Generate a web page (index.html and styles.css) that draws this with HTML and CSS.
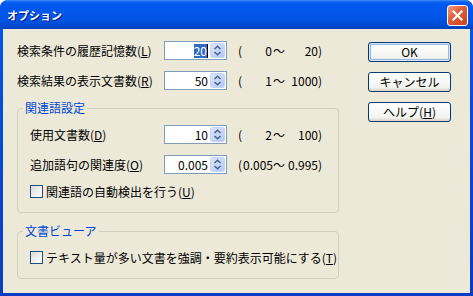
FILE: index.html
```html
<!DOCTYPE html>
<html lang="ja">
<head>
  <meta charset="UTF-8">
  <title>オプション</title>
  <link rel="stylesheet" href="styles.css">
</head>
<body>

  <!-- Options dialog -->
  <div class="window">
    <div class="titlebar">
      <span class="title">オプション</span>
      <span class="close">
        <svg width="13" height="13" viewBox="0 0 13 13"><path d="M2.5 2.5 L10.5 10.5 M10.5 2.5 L2.5 10.5" stroke="#fff" stroke-width="2.2" stroke-linecap="square"/></svg>
      </span>
    </div>

    <div class="client">
      <div class="main">
        <div class="row">
          <label class="label">検索条件の履歴記憶数(<u>L</u>)</label>
          <div class="spin">
            <span class="value"><span class="sel">20</span><span class="caret"></span></span>
            <svg class="arrows" width="15" height="15" viewBox="0 0 15 15"><use href="#spinbtn"/></svg>
          </div>
          <div class="range"><span class="paren">(</span><span class="min">0</span><span class="tilde">～</span><span class="max">20</span><span>)</span></div>
        </div>
        <div class="row">
          <label class="label">検索結果の表示文書数(<u>R</u>)</label>
          <div class="spin">
            <span class="value">50</span>
            <svg class="arrows" width="15" height="15" viewBox="0 0 15 15"><use href="#spinbtn"/></svg>
          </div>
          <div class="range"><span class="paren">(</span><span class="min">1</span><span class="tilde">～</span><span class="max">1000</span><span>)</span></div>
        </div>

        <!-- 関連語設定 -->
        <fieldset class="group">
          <legend>関連語設定</legend>
          <div class="row">
            <label class="label">使用文書数(<u>D</u>)</label>
            <div class="spin">
              <span class="value">10</span>
              <svg class="arrows" width="15" height="15" viewBox="0 0 15 15"><use href="#spinbtn"/></svg>
            </div>
            <div class="range"><span class="paren">(</span><span class="min">2</span><span class="tilde">～</span><span class="max">100</span><span>)</span></div>
          </div>
          <div class="row">
            <label class="label">追加語句の関連度(<u>O</u>)</label>
            <div class="spin">
              <span class="value">0.005</span>
              <svg class="arrows" width="15" height="15" viewBox="0 0 15 15"><use href="#spinbtn"/></svg>
            </div>
            <div class="range"><span class="paren">(</span><span class="min">0.005</span><span class="tilde">～</span><span class="max">0.995</span><span>)</span></div>
          </div>
          <label class="check"><span class="box"></span>関連語の自動検出を行う(<u>U</u>)</label>
        </fieldset>

        <!-- 文書ビューア -->
        <fieldset class="group second">
          <legend>文書ビューア</legend>
          <label class="check"><span class="box"></span>テキスト量が多い文書を強調・要約表示可能にする(<u>T</u>)</label>
        </fieldset>
      </div>

      <div class="side">
        <button class="btn default">OK</button>
        <button class="btn">キャンセル</button>
        <button class="btn">ヘルプ(<u>H</u>)</button>
      </div>
    </div>
  </div>

  <!-- shared spin button -->
  <svg width="0" height="0" class="defs">
    <defs>
      <linearGradient id="spinfill" x1="0" y1="0" x2="1" y2="1">
        <stop offset="0" stop-color="#DDE7FD"/>
        <stop offset="1" stop-color="#B3C8F6"/>
      </linearGradient>
      <g id="spinbtn">
        <rect x="0.5" y="0.5" width="14" height="14" rx="2" fill="url(#spinfill)" stroke="#C3D3F7"/>
        <path d="M4.5 6 L7.5 3.2 L10.5 6 M4.5 9 L7.5 11.8 L10.5 9" fill="none" stroke="#4D6185" stroke-width="1.5"/>
      </g>
    </defs>
  </svg>

</body>
</html>
```

FILE: styles.css
```css
body {
  margin: 0;
  background: #fff;
  font-family: "Noto Sans CJK JP", sans-serif;
  font-size: 12px;
  color: #000;
}
.defs {
  position: absolute;
}
.window {
  width: 473px;
  height: 296px;
  display: flex;
  flex-direction: column;
  background: linear-gradient(#0058EE, #0847D4 60%, #0A3CC4);
  border-radius: 8px 8px 0 0;
  overflow: hidden;
}
.titlebar {
  height: 29px;
  flex: none;
  display: flex;
  align-items: center;
  justify-content: space-between;
  padding: 0 5px 0 7px;
  background: linear-gradient(#3D8CF8 0, #0A61EE 2px, #0058EE 4px, #0256EA 14px, #0052E0 21px, #0049CF 26px, #0040BC 29px);
}
.title {
  color: #fff;
  font-weight: bold;
  font-size: 11px;
  text-shadow: 1px 1px #0A1883;
}
.close {
  width: 21px;
  height: 21px;
  margin-top: 1px;
  box-sizing: border-box;
  border: 1px solid #fff;
  border-radius: 3px;
  background: linear-gradient(135deg, #F0A086, #E0603A 40%, #C8421E);
  display: flex;
  align-items: center;
  justify-content: center;
}
.client {
  flex: 1;
  margin: 0 3px 3px;
  background: #ECE9D8;
  display: flex;
  padding: 12px 0 0 14px;
}
.main {
  width: 322px;
}
.row {
  display: flex;
  align-items: center;
  height: 19px;
  margin-bottom: 11px;
}
.label {
  width: 147px;
  line-height: 14px;
}
.group .label {
  width: 134px;
}
.spin {
  width: 63px;
  height: 19px;
  box-sizing: border-box;
  border: 1px solid #7F9DB9;
  background: #fff;
  display: flex;
  align-items: center;
}
.value {
  flex: 1;
  text-align: right;
  padding-right: 2px;
  line-height: 14px;
  display: flex;
  justify-content: flex-end;
}
.sel {
  background: #316AC5;
  color: #fff;
}
.caret {
  width: 1px;
  height: 14px;
  background: #000;
}
.arrows {
  flex: none;
  margin-right: 1px;
}
.range {
  margin-left: 11px;
  display: flex;
  line-height: 14px;
}
.paren {
  width: 5px;
}
.min {
  width: 29px;
  text-align: right;
}
.tilde {
  width: 14px;
  text-align: center;
}
.max {
  width: 32px;
  text-align: right;
}
.group {
  margin: 0;
  padding: 10px 0 14px 12px;
  border: 1px solid #D0D0BF;
  border-radius: 4px;
}
.group.second {
  margin-top: 11px;
  padding-top: 13px;
}
.group legend {
  padding: 0 2px;
  margin-left: -7px;
  color: #0046D5;
  line-height: 14px;
}
.check {
  display: flex;
  align-items: center;
  height: 13px;
  line-height: 14px;
  margin-top: 2px;
}
.group.second .check {
  margin-top: 0;
}
.box {
  width: 13px;
  height: 13px;
  box-sizing: border-box;
  border: 1px solid #1C5180;
  background: linear-gradient(135deg, #DCDCD7, #fff);
  margin-right: 3px;
}
.side {
  margin-left: 29px;
  padding-top: 1px;
  display: flex;
  flex-direction: column;
  gap: 10px;
}
.btn {
  width: 83px;
  height: 20px;
  box-sizing: border-box;
  border: 1px solid #003C74;
  border-radius: 3px;
  background: linear-gradient(#FFFFFF, #F3F3EF 80%, #D8D3C8);
  font-family: "Noto Sans CJK JP", sans-serif;
  font-size: 12px;
  line-height: 14px;
  padding: 0;
  color: #000;
}
.btn.default {
  box-shadow: inset 0 0 0 1px #CEE7FF, inset 0 0 0 2px #98B8EA;
}
```
